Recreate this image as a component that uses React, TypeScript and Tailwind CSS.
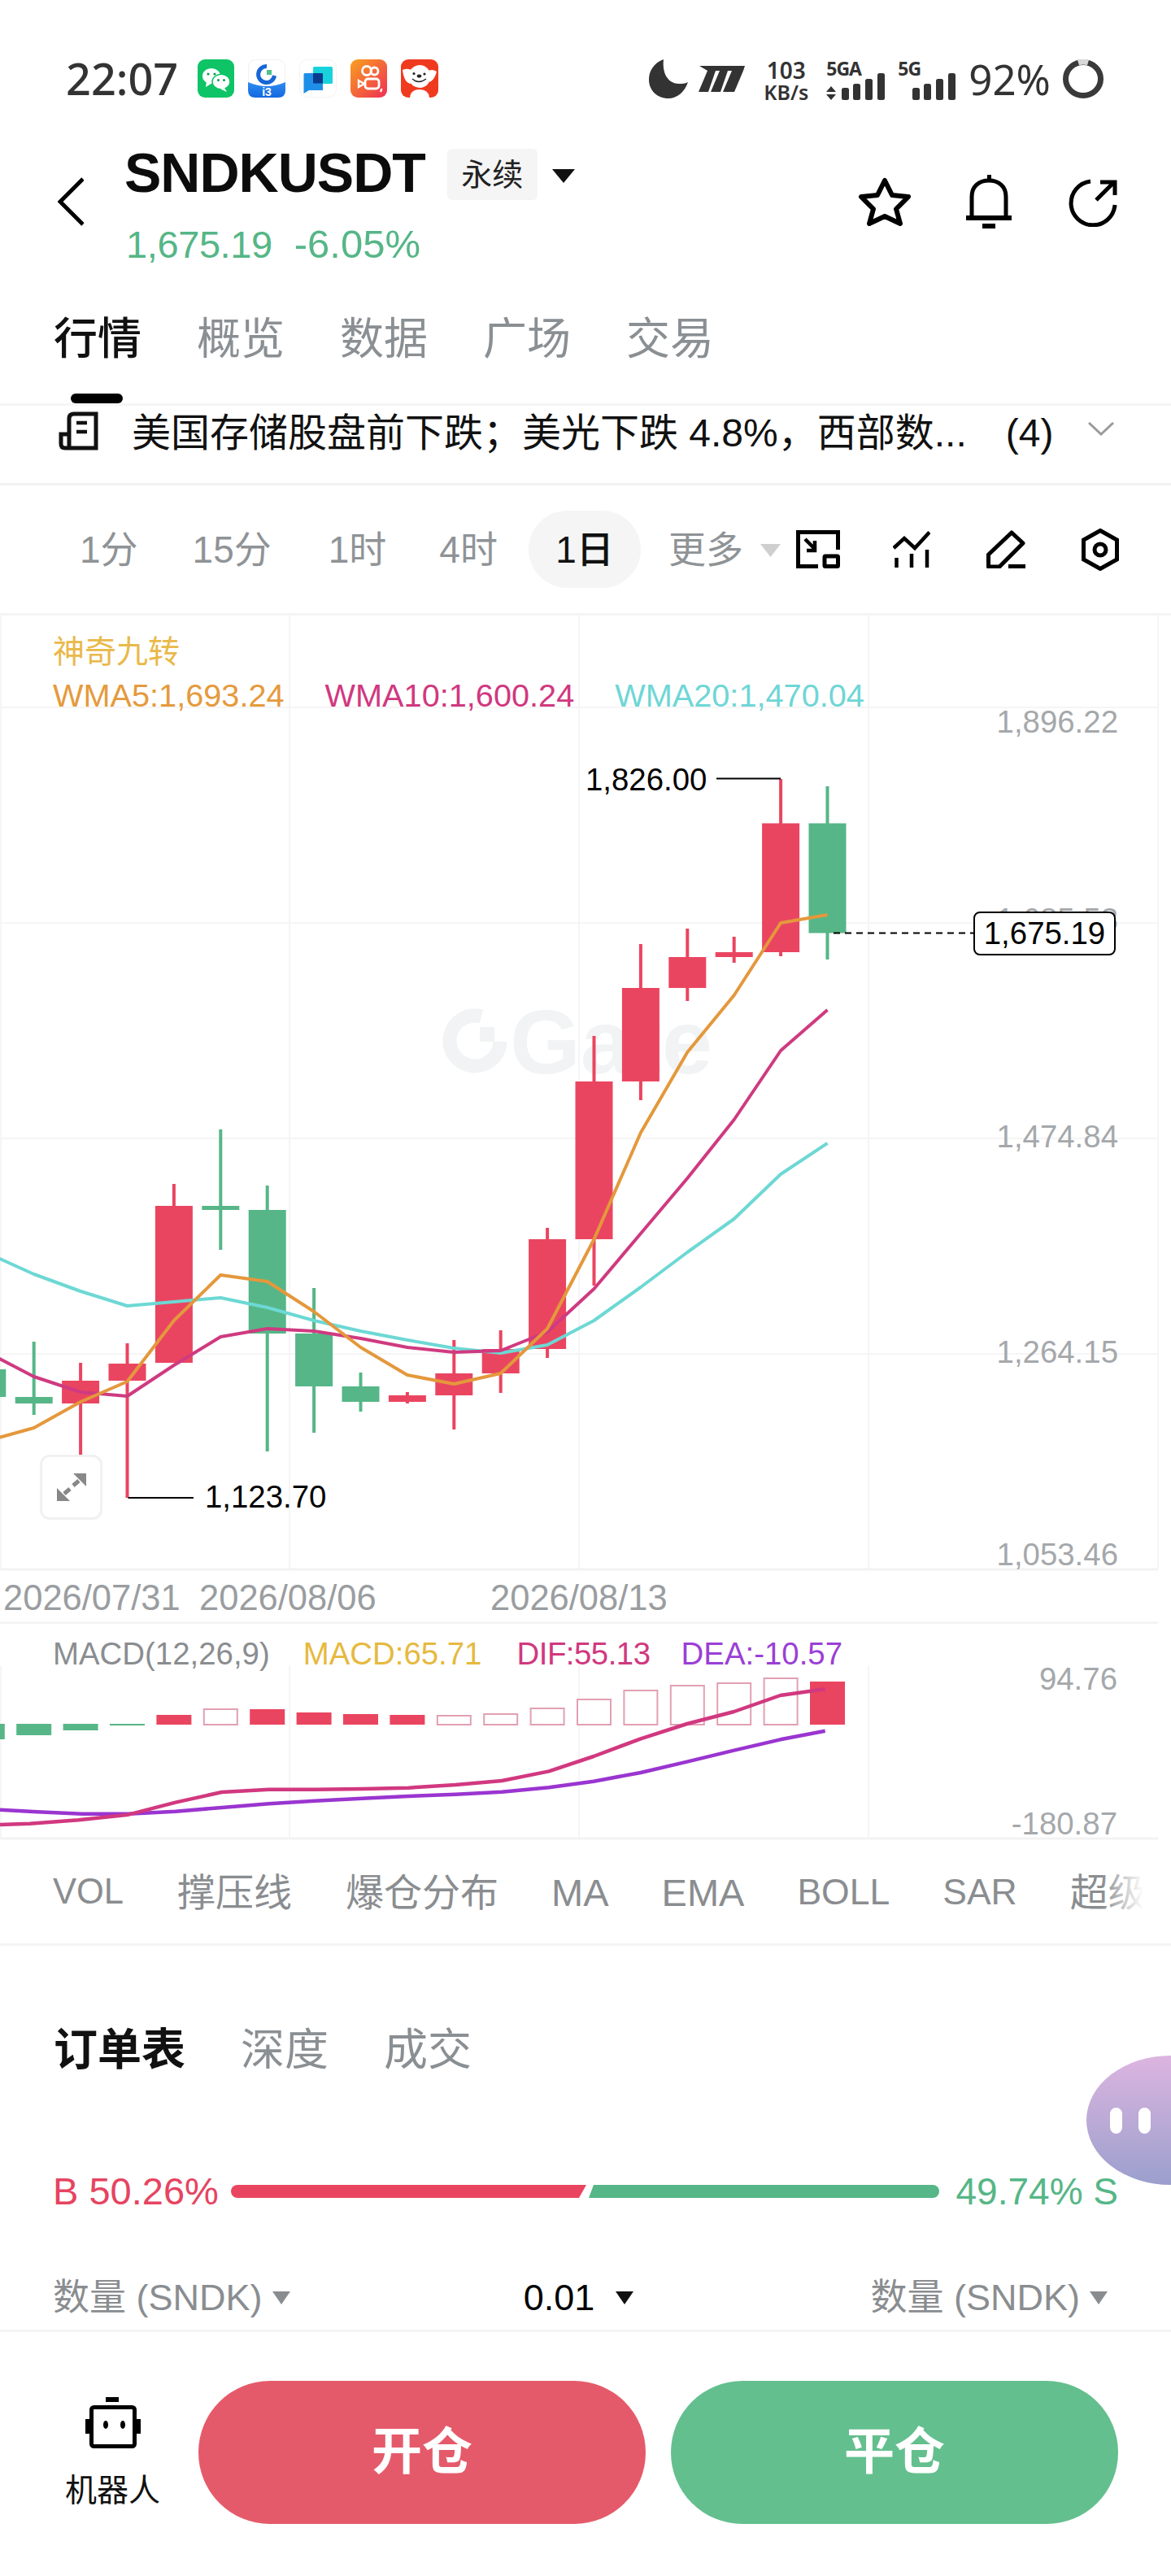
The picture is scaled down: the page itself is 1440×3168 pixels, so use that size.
import React from "react";

const RED = "#ea4560";
const GREEN = "#56b687";
const X = (k: number) => 1017.5 - 57.4 * k;

type C = [number, "r" | "g", number, number, number, number];
const candles: C[] = [
  [0, "g", 1012.5, 1147.5, 967, 1180],
  [1, "r", 1012.5, 1171, 958, 1176],
  [2, "r", 1171, 1177, 1152, 1184],
  [3, "r", 1177, 1215, 1142, 1231],
  [4, "r", 1215, 1330, 1161, 1353],
  [5, "r", 1330, 1524, 1274, 1581],
  [6, "r", 1524, 1659, 1510, 1670],
  [7, "r", 1659, 1689, 1636, 1713],
  [8, "r", 1689, 1716, 1648, 1758],
  [9, "r", 1716, 1724, 1712, 1726],
  [10, "g", 1705, 1724, 1688, 1736],
  [11, "g", 1640, 1705, 1584, 1762],
  [12, "g", 1488, 1640, 1458, 1785],
  [13, "g", 1483, 1488, 1389, 1537],
  [14, "r", 1483, 1676, 1456, 1676],
  [15, "r", 1677, 1698, 1652, 1842],
  [16, "r", 1698, 1726, 1676, 1789],
  [17, "g", 1718, 1726, 1650, 1740],
  [18, "g", 1684, 1718, 1650, 1740],
];

const wma5 = [1125, 1135, 1224, 1294, 1393, 1524, 1634, 1689, 1702, 1691, 1657, 1613, 1576, 1568, 1624, 1699, 1724, 1756, 1772];
const wma10 = [1242, 1292, 1377, 1449, 1517, 1585, 1638, 1661, 1663, 1657, 1646, 1637, 1634, 1644, 1679, 1717, 1712, 1693, 1663];
const wma20 = [1406, 1444, 1499, 1540, 1583, 1624, 1654, 1664, 1658, 1648, 1637, 1624, 1608, 1596, 1601, 1606, 1588, 1567, 1541];
const pts = (a: number[]) => a.map((y, k) => `${X(k)},${y}`).join(" ");

const dif = [[0,852],[40,848],[105,835],[172,815],[235,770],[297,732],[360,722],[422,722],[485,720],[547,716],[610,705],[672,690],[735,655],[795,600],[858,535],[920,480],[983,435],[1045,375],[1105,352]];
const dea = [[0,797],[50,805],[110,812],[172,812],[235,803],[297,789],[360,775],[422,764],[485,755],[547,747],[610,740],[672,731],[735,715],[795,692],[858,660],[920,620],[983,578],[1045,538],[1105,506]];
const zpts = (a: number[][]) => a.map(([x, y]) => `${x / 1.089},${1960 + y / 3}`).join(" ");

type H = [number, number, "f" | "h" | "g"];
const hist: H[] = [
  [0, 2068, "f"], [1, 2063, "h"], [2, 2069, "h"], [3, 2072, "h"], [4, 2078, "h"], [5, 2089, "h"], [6, 2100, "h"],
  [7, 2107, "h"], [8, 2109, "h"], [9, 2109, "f"], [10, 2108, "f"], [11, 2106, "f"], [12, 2102, "f"], [13, 2101, "h"],
  [14, 2109, "f"], [15, 2122, "g"], [16, 2128, "g"], [17, 2134, "g"], [18, 2139, "g"],
];

function Tri({ color, w = 24, h = 16 }: { color: string; w?: number; h?: number }) {
  return (
    <svg width={w} height={h} viewBox="0 0 24 16" preserveAspectRatio="none" className="shrink-0">
      <polygon points="0,0 24,0 12,16" fill={color} />
    </svg>
  );
}

function AppIcons() {
  return (
    <div className="flex gap-[17px] ml-[24px]">
      <svg width="45" height="47" viewBox="0 0 45 47">
        <rect width="45" height="47" rx="9" fill="#0ec466" />
        <ellipse cx="17" cy="20.5" rx="11" ry="9.5" fill="#fff" />
        <polygon points="11,27 10,34 18,29" fill="#fff" />
        <circle cx="13" cy="18" r="1.6" fill="#0a9a50" />
        <circle cx="21" cy="18" r="1.6" fill="#0a9a50" />
        <ellipse cx="29" cy="27.5" rx="11" ry="9.2" fill="#fff" stroke="#0ec466" strokeWidth="1.5" />
        <polygon points="33,35 36,40 28,36.5" fill="#fff" />
        <circle cx="25.5" cy="25.5" r="1.5" fill="#0a9a50" />
        <circle cx="32.5" cy="25.5" r="1.5" fill="#0a9a50" />
      </svg>
      <svg width="46" height="47" viewBox="0 0 46 47">
        <defs>
          <linearGradient id="bl" x1="0" y1="0" x2="0" y2="1">
            <stop offset="0" stopColor="#2f8cf0" />
            <stop offset="1" stopColor="#1468e0" />
          </linearGradient>
        </defs>
        <rect x="0.5" y="0.5" width="45" height="46" rx="9" fill="#fff" stroke="#f0f0f0" />
        <path d="M0 28 Q23 38 46 28 V38 Q46 47 37 47 H9 Q0 47 0 38Z" fill="url(#bl)" />
        <path d="M23 8.5 A10 10 0 1 0 32.5 20" fill="none" stroke="#1766d6" strokeWidth="5" />
        <rect x="23" y="13" width="6" height="6" fill="#4cc38a" />
        <text x="23" y="45" textAnchor="middle" fontSize="14" fontWeight="700" fill="#fff" fontFamily="Liberation Sans">i3</text>
      </svg>
      <svg width="46" height="47" viewBox="0 0 46 47">
        <rect x="0.5" y="0.5" width="45" height="46" rx="9" fill="#fff" stroke="#f3f3f3" />
        <rect x="17" y="9" width="24" height="21" rx="1.5" fill="#18d3dc" />
        <path d="M5.5 18.5 Q5.5 17 7 17 H29 V38 H12 L5.5 42 Z" fill="#1d8fe8" />
        <rect x="17" y="17" width="12" height="12.5" rx="1" fill="#0c3b8e" />
      </svg>
      <svg width="45" height="47" viewBox="0 0 45 47">
        <defs>
          <linearGradient id="ks" x1="0" y1="0" x2="1" y2="1">
            <stop offset="0" stopColor="#f9a01e" />
            <stop offset="1" stopColor="#ef2f55" />
          </linearGradient>
        </defs>
        <rect width="45" height="47" rx="9" fill="url(#ks)" />
        <circle cx="20" cy="14" r="5.5" fill="none" stroke="#fff" strokeWidth="2.8" />
        <circle cx="29.5" cy="14.5" r="4.5" fill="none" stroke="#fff" strokeWidth="2.8" />
        <rect x="18" y="24" width="17" height="12" rx="3.5" fill="none" stroke="#fff" strokeWidth="2.8" />
        <polygon points="17,30 10,26 10,34" fill="none" stroke="#fff" strokeWidth="2.4" />
        <path d="M38.5 36 L37 40" stroke="#fff" strokeWidth="2.2" />
      </svg>
      <svg width="46" height="47" viewBox="0 0 46 47">
        <rect width="46" height="47" rx="9" fill="#f03a1e" />
        <path d="M2 13 Q9 10 14 14 L12 30 Q4 29 2 13Z M44 15 Q38 11 32 15 L34 28 Q41 27 44 15Z" fill="#fff" />
        <ellipse cx="23" cy="21" rx="13.5" ry="14" fill="#fff" />
        <path d="M11 47 Q12 37 23 37 Q34 37 35 47Z" fill="#fff" />
        <circle cx="16" cy="17.5" r="1.6" fill="#222" />
        <circle cx="29" cy="18" r="1.6" fill="#222" />
        <ellipse cx="22.5" cy="20.5" rx="2.8" ry="2" fill="#222" />
        <path d="M14 24 Q22 31 31 24" fill="none" stroke="#222" strokeWidth="1.3" />
      </svg>
    </div>
  );
}

function Bars() {
  return (
    <svg width="54" height="33" viewBox="0 0 54 33" className="absolute right-0 top-[17px]">
      <rect x="0" y="18" width="9" height="15" rx="2.5" fill="#333" />
      <rect x="14" y="13" width="9" height="20" rx="2.5" fill="#333" />
      <rect x="29" y="7" width="9" height="26" rx="2.5" fill="#333" />
      <rect x="44" y="0" width="9" height="33" rx="2.5" fill="#333" />
    </svg>
  );
}

function StatusBar() {
  return (
    <div className="flex h-[170px] pt-[73px] pl-[81px] pr-[83px] items-start justify-between text-[#333] font-['Noto_Sans','Noto_Sans_CJK_SC',sans-serif]">
      <div className="flex items-center h-[47px]">
        <span className="text-[54px] leading-[47px] font-medium">22:07</span>
        <AppIcons />
      </div>
      <div className="flex items-start h-[50px]">
        <svg width="48" height="48" viewBox="0 0 48 48">
          <path d="M18 0 C5 5 0 15 0 25 C0 38 10 48 24 48 C35 48 44 40 48 28 C44 30 41 30 37 30 C24 30 16 18 18 0Z" fill="#333" />
        </svg>
        <svg width="57" height="32" viewBox="0 0 57 32" className="ml-[13px] mt-[8px]">
          <polygon points="1,0 57,0 55,6 11,6" fill="#333" />
          <polygon points="11,6 21,6 12,32 0,32" fill="#333" />
          <polygon points="26,6 36,6 27,32 15,32" fill="#333" />
          <polygon points="41,6 55,6 44,32 30,32" fill="#333" />
        </svg>
        <div className="ml-[23px] w-[55px] flex flex-col items-center font-semibold">
          <span className="text-[28px] leading-[26px]">103</span>
          <span className="text-[25px] leading-[26px] mt-[1px]">KB/s</span>
        </div>
        <div className="relative ml-[22px] w-[73px] h-[50px]">
          <span className="absolute left-0 top-0 text-[23px] leading-[22px] font-bold tracking-[-1px]">5GA</span>
          <svg width="12" height="17" viewBox="0 0 12 17" className="absolute left-0 top-[33px]">
            <polygon points="6,0 12,7 0,7" fill="#333" />
            <polygon points="6,17 12,10 0,10" fill="#333" />
          </svg>
          <Bars />
        </div>
        <div className="relative ml-[15px] w-[72px] h-[50px]">
          <span className="absolute left-0 top-0 text-[23px] leading-[22px] font-bold tracking-[-1px]">5G</span>
          <Bars />
        </div>
        <span className="ml-[15px] text-[51px] leading-[50px] mt-[-1px]">92%</span>
        <svg width="50" height="48" viewBox="0 0 50 48" className="ml-[15px]">
          <ellipse cx="25" cy="24" rx="21.5" ry="20.5" fill="none" stroke="#3a3a3a" strokeWidth="7" />
          <path d="M19 4 A21 21 0 0 1 31 4" fill="none" stroke="#d8d8d8" strokeWidth="7" />
        </svg>
      </div>
    </div>
  );
}

function Header() {
  return (
    <div className="flex h-[200px] items-start">
      <svg width="32" height="60" viewBox="0 0 32 60" className="ml-[71px] mt-[48px] shrink-0">
        <path d="M31 2 L3 30 L31 58" fill="none" stroke="#000" strokeWidth="5" />
      </svg>
      <div className="ml-[50px] flex flex-col">
        <div className="flex items-center h-[70px] mt-[7px]">
          <span className="text-[68px] leading-[70px] font-bold tracking-[-1px] text-[#0c0c0c]">SNDKUSDT</span>
          <span className="ml-[27px] mt-[5px] w-[111px] h-[63px] rounded-md bg-[#f5f5f5] flex items-center justify-center text-[38px] leading-none text-[#222]">永续</span>
          <span className="ml-[18px] mt-[9px]"><Tri color="#111" w={28} h={17} /></span>
        </div>
        <div className="flex mt-[28px] leading-[50px] text-[#56b687] ml-[2px] items-baseline">
          <span className="text-[47px] tracking-[-0.4px]">1,675.19</span>
          <span className="ml-[27px] text-[49px]">-6.05%</span>
        </div>
      </div>
      <div className="ml-auto pr-[66px] pt-[45px] flex items-start">
        <svg width="66" height="62" viewBox="0 0 66 62" className="mt-[2px]">
          <path d="M33 5 L42 23 L62 25 L47 40 L52 58 L33 49 L14 58 L19 40 L4 25 L24 23 Z" fill="none" stroke="#000" strokeWidth="6" strokeLinejoin="round" />
        </svg>
        <svg width="56" height="66" viewBox="0 0 56 66" className="ml-[67px]">
          <rect x="26" y="0" width="5" height="7" fill="#000" />
          <path d="M7 51 V27 C7 14 16 7 28 7 C40 7 49 14 49 27 V51" fill="none" stroke="#000" strokeWidth="5" />
          <rect x="0" y="50" width="56" height="6" fill="#000" />
          <rect x="20" y="60" width="16" height="6" fill="#000" />
        </svg>
        <svg width="60" height="60" viewBox="0 0 60 60" className="ml-[70px] mt-[4px]">
          <path d="M27 4 A27 27 0 1 0 57 33" fill="none" stroke="#000" strokeWidth="5" />
          <path d="M56 5 L34 27 M39 5 H57 V21" fill="none" stroke="#000" strokeWidth="5" />
        </svg>
      </div>
    </div>
  );
}

function MainTabs() {
  const items = ["概览", "数据", "广场", "交易"];
  return (
    <div className="h-[129px] border-b-[3px] border-[#f5f5f5]">
      <div className="flex pt-[20px] pl-[66px] gap-[68px] text-[54px] leading-[54px] text-[#8a8f93]">
        <span className="text-[#111] font-medium">行情</span>
        {items.map((t) => (
          <span key={t}>{t}</span>
        ))}
      </div>
      <div className="ml-[87px] mt-[40px] w-[64px] h-[12px] rounded-full bg-black" />
    </div>
  );
}

function News() {
  return (
    <div className="h-[98px] border-b-[3px] border-[#f2f2f2] flex items-start pl-[72px] pt-[7px] text-[#111]">
      <svg width="49" height="48" viewBox="0 0 49 48" className="shrink-0">
        <path d="M13 43 V9 Q13 3 19 3 H46 V45 H8 Q3 45 3 40 V28 H12" fill="none" stroke="#111" strokeWidth="5" />
        <path d="M22 14 H35 M22 25 H35" fill="none" stroke="#111" strokeWidth="4.5" />
      </svg>
      <span className="ml-[41px] mt-[3px] text-[48px] leading-[48px] whitespace-nowrap">美国存储股盘前下跌；美光下跌 4.8%，西部数...</span>
      <span className="ml-[48px] mt-[3px] text-[48px] leading-[48px]">(4)</span>
      <svg width="32" height="17" viewBox="0 0 32 17" className="ml-[43px] mt-[13px]">
        <path d="M1 1 L16 15 L31 1" fill="none" stroke="#9a9a9a" strokeWidth="3" />
      </svg>
    </div>
  );
}

function TimeRow() {
  return (
    <div className="h-[160px] border-b-[3px] border-[#f5f5f5] flex items-center pl-[98px] text-[46px] leading-none text-[#8f9396]">
      <span>1分</span>
      <span className="ml-[67px]">15分</span>
      <span className="ml-[70px]">1时</span>
      <span className="ml-[65px]">4时</span>
      <span className="ml-[38px] w-[138px] h-[95px] rounded-full bg-[#f5f5f5] text-[#111] flex items-center justify-center font-medium">1日</span>
      <span className="ml-[34px]">更多</span>
      <span className="ml-[21px] mt-[2px]"><Tri color="#cfcfcf" w={25} h={16} /></span>
      <svg width="54" height="47" viewBox="0 0 54 47" className="ml-[19px]">
        <path d="M2.5 24 V2.5 H51.5 V24 M2.5 24 V44.5 H27" fill="none" stroke="#000" strokeWidth="5" />
        <rect x="35" y="32" width="16.5" height="12.5" rx="1" fill="none" stroke="#000" strokeWidth="5" />
        <path d="M11 11 L24 24 M23 13 V25 H13" fill="none" stroke="#000" strokeWidth="4.5" />
      </svg>
      <svg width="46" height="46" viewBox="0 0 46 46" className="ml-[65px]">
        <path d="M1 21 L14 9 L27 21 L45 1.5" fill="none" stroke="#000" strokeWidth="4.5" />
        <path d="M4.5 33 V45 M23 28 V45 M42 23 V45" fill="none" stroke="#000" strokeWidth="4.5" />
      </svg>
      <svg width="48" height="47" viewBox="0 0 48 47" className="ml-[69px]">
        <path d="M31 3 L45 16 L16 45 H2.5 V30 Z" fill="none" stroke="#000" strokeWidth="5" strokeLinejoin="round" />
        <path d="M27 44.5 H48" fill="none" stroke="#000" strokeWidth="5" />
      </svg>
      <svg width="46" height="52" viewBox="0 0 46 52" className="ml-[69px]">
        <path d="M23 2.5 L43.5 14 V38 L23 49.5 L2.5 38 V14 Z" fill="none" stroke="#000" strokeWidth="5" />
        <circle cx="23" cy="26" r="7" fill="none" stroke="#000" strokeWidth="5" />
      </svg>
    </div>
  );
}

function KChart() {
  const hLines = [870, 1135, 1400, 1665];
  return (
    <div className="relative h-[1240px] text-[38.4px] leading-[38px]">
      <svg width="1440" height="1240" viewBox="0 757 1440 1240" className="absolute left-0 top-0">
        {[1, 356, 712, 1068, 1424].map((x) => (
          <line key={x} x1={x} x2={x} y1={757} y2={1930} stroke="#f5f5f6" strokeWidth="2" />
        ))}
        {hLines.map((y) => (
          <line key={y} x1={0} x2={1424} y1={y} y2={y} stroke="#f5f5f6" strokeWidth="2" />
        ))}
        <line x1={0} x2={1424} y1={1930} y2={1930} stroke="#f3f3f3" strokeWidth="3" />
        <line x1={0} x2={1424} y1={1996} y2={1996} stroke="#f3f3f3" strokeWidth="3" />
        <path d="M592 1250 A31 31 0 1 0 615 1281" fill="none" stroke="#f1f3f4" strokeWidth="17" />
        <rect x="590" y="1263" width="18" height="18" fill="#f1f3f4" />
        <text x="627" y="1320" fontSize="112" fontWeight="700" fill="#f1f3f4" fontFamily="Liberation Sans">Gate</text>
        {candles.map(([k, c, t, b, wt, wb]) => {
          const col = c === "r" ? RED : GREEN;
          const x = X(k);
          return (
            <g key={k}>
              <line x1={x} x2={x} y1={wt} y2={wb} stroke={col} strokeWidth="4" />
              <rect x={x - 23} y={t} width="46" height={b - t} fill={col} />
            </g>
          );
        })}
        <polyline points={pts(wma20)} fill="none" stroke="#6dd8d4" strokeWidth="4" strokeLinejoin="round" />
        <polyline points={pts(wma10)} fill="none" stroke="#cf3a80" strokeWidth="4" strokeLinejoin="round" />
        <polyline points={pts(wma5)} fill="none" stroke="#e4983c" strokeWidth="4" strokeLinejoin="round" />
        <line x1={881} x2={960} y1={957.5} y2={957.5} stroke="#000" strokeWidth="2" />
        <line x1={157.5} x2={238} y1={1842} y2={1842} stroke="#000" strokeWidth="2" />
        <line x1={1025} x2={1197} y1={1147.5} y2={1147.5} stroke="#000" strokeWidth="2" strokeDasharray="8 6" />
      </svg>

      <div className="absolute left-[65px] top-[25px] flex flex-col">
        <span className="text-[39px] leading-[40px] text-[#e9b94a]">神奇九转</span>
        <div className="flex mt-[13px] gap-[50px] text-[39.7px] leading-[40px]">
          <span className="text-[#e59a3c]">WMA5:1,693.24</span>
          <span className="text-[#d1387f]">WMA10:1,600.24</span>
          <span className="text-[#6fd6d6]">WMA20:1,470.04</span>
        </div>
      </div>

      <span className="absolute right-[65px] top-[112px] text-[#a5a8ab]">1,896.22</span>
      <span className="absolute right-[65px] top-[355px] text-[#a5a8ab]">1,685.53</span>
      <span className="absolute right-[65px] top-[622px] text-[#a5a8ab]">1,474.84</span>
      <span className="absolute right-[65px] top-[887px] text-[#a5a8ab]">1,264.15</span>
      <span className="absolute right-[65px] top-[1136px] text-[#a5a8ab]">1,053.46</span>

      <span className="absolute left-[1197px] top-[364px] w-[175px] h-[54px] bg-white border-2 border-black rounded-lg flex items-center justify-center text-black">1,675.19</span>
      <span className="absolute left-[720px] top-[183px] text-black">1,826.00</span>
      <span className="absolute left-[252px] top-[1065px] text-black">1,123.70</span>

      <div className="absolute left-[49px] top-[1032px] w-[77px] h-[80px] bg-white border-[3px] border-[#f1f1f1] rounded-xl flex items-center justify-center">
        <svg width="36" height="36" viewBox="0 0 36 36">
          <polygon points="20,1 36,1 36,17" fill="#888" />
          <polygon points="0,19 0,35 16,35" fill="#888" />
          <path d="M27 10 L20 16 M9 26 L16 20" stroke="#888" strokeWidth="5" fill="none" />
        </svg>
      </div>

      <span className="absolute left-[4px] top-[1187px] text-[43.5px] leading-[42px] text-[#9a9da0]">2026/07/31</span>
      <span className="absolute left-[245px] top-[1187px] text-[43.5px] leading-[42px] text-[#9a9da0]">2026/08/06</span>
      <span className="absolute left-[603px] top-[1187px] text-[43.5px] leading-[42px] text-[#9a9da0]">2026/08/13</span>
    </div>
  );
}

function Macd() {
  return (
    <div className="relative h-[267px] text-[38.4px] leading-[38px]">
      <svg width="1440" height="267" viewBox="0 1997 1440 267" className="absolute left-0 top-0">
        {[1, 356, 712, 1068].map((x) => (
          <line key={x} x1={x} x2={x} y1={2048} y2={2261} stroke="#f5f5f6" strokeWidth="2" />
        ))}
        <line x1={0} x2={1424} y1={2261} y2={2261} stroke="#f3f3f3" strokeWidth="3" />
        {hist.map(([k, t, kind]) => {
          const x = X(k) - 21.5;
          if (kind === "g") return <rect key={k} x={x} y={2120} width="43" height={t - 2120} fill={GREEN} />;
          if (kind === "f") return <rect key={k} x={x} y={t} width="43" height={2121 - t} fill={RED} />;
          return <rect key={k} x={x + 1} y={t + 1} width="41" height={2120 - t} fill="#fff" stroke="#e2a0b2" strokeWidth="2" />;
        })}
        <polyline points={zpts(dea)} fill="none" stroke="#9a35d0" strokeWidth="4.5" strokeLinejoin="round" />
        <polyline points={zpts(dif)} fill="none" stroke="#d1387f" strokeWidth="4.5" strokeLinejoin="round" />
      </svg>
      <div className="absolute left-[65px] top-[18px] flex">
        <span className="text-[#8a8d90]">MACD(12,26,9)</span>
        <span className="ml-[41px] text-[#e6b93f]">MACD:65.71</span>
        <span className="ml-[43px] text-[#d1387f] tracking-[-0.5px]">DIF:55.13</span>
        <span className="ml-[38px] text-[#9b3fd6]">DEA:-10.57</span>
      </div>
      <span className="absolute right-[66px] top-[49px] text-[#a5a8ab]">94.76</span>
      <span className="absolute right-[66px] top-[227px] text-[#a5a8ab]">-180.87</span>
    </div>
  );
}

function IndicatorRow() {
  return (
    <div className="relative h-[129px] border-b-[3px] border-[#f5f5f5] overflow-hidden flex items-center pl-[65px] gap-[65px] text-[47px] leading-none text-[#8a8d90] whitespace-nowrap">
      <span className="text-[43.5px]">VOL</span>
      <span className="ml-[1px]">撑压线</span>
      <span className="ml-[1px]">爆仓分布</span>
      <span>MA</span>
      <span>EMA</span>
      <span className="text-[44.5px]">BOLL</span>
      <span className="text-[44.5px]">SAR</span>
      <span>超级</span>
      <div className="absolute right-0 top-0 h-full w-[85px] bg-linear-to-r from-transparent to-white to-60%" />
    </div>
  );
}

function OrderBook() {
  return (
    <div className="h-[472px]">
      <div className="flex pt-[101px] pl-[66px] gap-[68px] text-[54px] leading-[54px] text-[#8a8f93]">
        <span className="text-[#111] font-semibold">订单表</span>
        <span>深度</span>
        <span>成交</span>
      </div>
      <div className="flex items-center mt-[124px] pl-[65px] pr-[65px] h-[46px] text-[47px] leading-[46px]">
        <span className="w-[219px] text-[#e64461]">B 50.26%</span>
        <div className="flex w-[871px] h-[16px]">
          <div className="w-[437px] rounded-l-full bg-[#ea4560] [clip-path:polygon(0_0,100%_0,428px_100%,0_100%)]" />
          <div className="ml-[3px] w-[431px] rounded-r-full bg-[#56b687] [clip-path:polygon(6px_0,100%_0,100%_100%,0_100%)]" />
        </div>
        <span className="ml-auto text-[46px] text-[#56b687]">49.74% S</span>
      </div>
      <div className="flex items-center justify-between mt-[85px] pl-[65px] pr-[78px] h-[46px] text-[45px] leading-[46px] text-[#8a8d90]">
        <div className="flex items-center gap-[12px]">
          <span>数量 (SNDK)</span>
          <Tri color="#8a8d90" w={22} h={16} />
        </div>
        <div className="flex items-center gap-[26px] text-black ml-[-4px]">
          <span>0.01</span>
          <Tri color="#111" w={22} h={16} />
        </div>
        <div className="flex items-center gap-[12px]">
          <span>数量 (SNDK)</span>
          <Tri color="#8a8d90" w={22} h={16} />
        </div>
      </div>
    </div>
  );
}

function Footer() {
  return (
    <div className="h-[303px] border-t-[3px] border-[#f5f5f5] flex items-start pt-[60px]">
      <div className="ml-[80px] w-[117px] pt-[20px] flex flex-col items-center">
        <svg width="68" height="63" viewBox="0 0 68 63">
          <rect x="25" y="0" width="16" height="6" fill="#000" />
          <rect x="7.5" y="12.5" width="53" height="48" rx="3" fill="none" stroke="#000" strokeWidth="5" />
          <rect x="0" y="27" width="5" height="18" fill="#000" />
          <rect x="63" y="27" width="5" height="18" fill="#000" />
          <ellipse cx="25" cy="34" rx="3" ry="5" fill="#000" />
          <ellipse cx="46" cy="34" rx="3" ry="5" fill="#000" />
        </svg>
        <span className="mt-[32px] text-[39px] leading-[40px] text-[#111] whitespace-nowrap">机器人</span>
      </div>
      <div className="ml-[47px] flex gap-[31px]">
        <div className="w-[550px] h-[176px] rounded-full bg-[#e55a6a] flex items-center justify-center text-white text-[62px] leading-none font-bold">开仓</div>
        <div className="w-[550px] h-[176px] rounded-full bg-[#64bf8e] flex items-center justify-center text-white text-[62px] leading-none font-bold">平仓</div>
      </div>
    </div>
  );
}

export default function App() {
  return (
    <div className="relative w-[1440px] h-[3168px] overflow-hidden bg-white font-['Liberation_Sans','Noto_Sans_CJK_SC',sans-serif]">
      <StatusBar />
      <Header />
      <MainTabs />
      <News />
      <TimeRow />
      <KChart />
      <Macd />
      <IndicatorRow />
      <OrderBook />
      <Footer />
      <div className="absolute right-0 top-[2528px] w-[104px] h-[159px] [border-radius:104px_0_0_104px/80px_0_0_80px] bg-linear-to-b from-[#dcb5e0] to-[#9b9fcd] flex items-center gap-[20px] pl-[29px]">
        <span className="w-[15px] h-[32px] rounded-full bg-white" />
        <span className="w-[15px] h-[32px] rounded-full bg-white" />
      </div>
    </div>
  );
}
